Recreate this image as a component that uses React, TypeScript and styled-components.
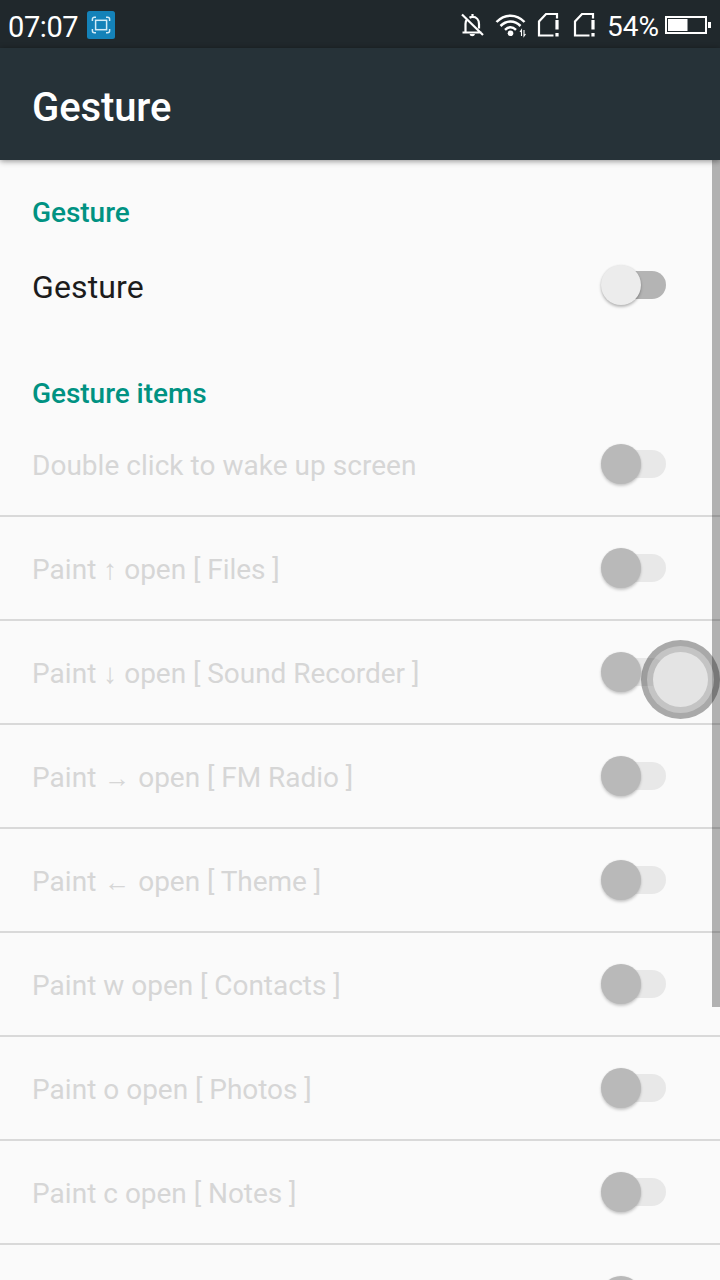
import React from "react";
import styled, { createGlobalStyle } from "styled-components";

const GlobalStyle = createGlobalStyle`
  body { margin: 0; background: #fafafa; overflow: hidden; }
  * { box-sizing: border-box; }
`;

const Screen = styled.div`
  position: relative;
  width: 720px;
  height: 1280px;
  overflow: hidden;
  background: #fafafa;
  font-family: Roboto, "Liberation Sans", sans-serif;
`;

const StatusBar = styled.header`
  display: flex;
  align-items: center;
  height: 48px;
  padding: 2px 9px 0 8px;
  background: #20282c;
  color: #fff;
`;

const Clock = styled.span`
  width: 79px;
  font-size: 29px;
  line-height: 46px;
  padding-top: 3px;
  letter-spacing: -0.4px;
`;

const StatusIcons = styled.div`
  display: flex;
  align-items: center;
  margin-left: auto;
`;

const Percent = styled.span`
  width: 58px;
  padding-top: 3px;
  font-size: 28px;
  line-height: 46px;
`;

const AppBar = styled.div`
  position: relative;
  display: flex;
  align-items: center;
  height: 112px;
  padding: 6px 32px 0;
  background: #263238;
  box-shadow: 0 1px 6px rgba(0, 0, 0, 0.45);
`;

const Title = styled.h1`
  margin: 0;
  color: #fff;
  font-size: 40px;
  font-weight: 500;
  letter-spacing: -0.1px;
`;

const SectionTitle = styled.h2<{ $top: number; $height: number }>`
  margin: 0;
  height: ${(p) => p.$height}px;
  padding: ${(p) => p.$top}px 32px 0;
  color: #009282;
  font-size: 28px;
  font-weight: 500;
  line-height: 32px;
  letter-spacing: -0.05px;
`;

const Row = styled.div<{ $main?: boolean }>`
  display: flex;
  align-items: center;
  justify-content: space-between;
  height: 104px;
  padding: 0 54px 0 32px;
  border-bottom: 2px solid ${(p) => (p.$main ? "transparent" : "#d9d9d9")};
`;

const Label = styled.span<{ $main?: boolean }>`
  padding-top: ${(p) => (p.$main ? 3 : 4)}px;
  color: ${(p) => (p.$main ? "#1c1c1c" : "#d6d6d6")};
  font-size: ${(p) => (p.$main ? 32 : 28)}px;
  line-height: 38px;
  letter-spacing: ${(p) => (p.$main ? 0.12 : 0.03)}px;
  white-space: pre;
`;

const AppName = styled.span`
  letter-spacing: -0.04px;
`;

const Arrow = styled.span<{ $wide: boolean }>`
  display: inline-block;
  width: ${(p) => (p.$wide ? 28 : 14)}px;
  font-family: "Liberation Sans", sans-serif;
  font-size: ${(p) => (p.$wide ? 26 : 28)}px;
  line-height: 28px;
  text-align: center;
`;

const Track = styled.div<{ $enabled?: boolean }>`
  display: flex;
  align-items: center;
  width: 54px;
  height: 28px;
  border-radius: 14px;
  background: ${(p) => (p.$enabled ? "#b4b4b4" : "#e8e8e8")};
`;

const Thumb = styled.div<{ $enabled?: boolean }>`
  flex: none;
  width: 40px;
  height: 40px;
  margin-left: -11px;
  border-radius: 50%;
  background: ${(p) => (p.$enabled ? "#ececec" : "#b9b9b9")};
  box-shadow: 0 2px 3px rgba(0, 0, 0, ${(p) => (p.$enabled ? 0.26 : 0.19)}), 0 0 2px rgba(0, 0, 0, 0.08);
`;

const ScrollBar = styled.div`
  position: absolute;
  top: 160px;
  right: 0;
  width: 8px;
  height: 847px;
  background: rgba(0, 0, 0, 0.29);
`;

const AssistiveButton = styled.div`
  position: absolute;
  left: 641px;
  top: 640px;
  width: 79px;
  height: 79px;
`;

const items: { text: string; arrow?: string; app?: string }[] = [
  { text: "Double click to wake up screen" },
  { text: "Paint ", arrow: "↑", app: "Files" },
  { text: "Paint ", arrow: "↓", app: "Sound Recorder" },
  { text: "Paint ", arrow: "→", app: "FM Radio" },
  { text: "Paint ", arrow: "←", app: "Theme" },
  { text: "Paint w", app: "Contacts" },
  { text: "Paint o", app: "Photos" },
  { text: "Paint c", app: "Notes" },
  { text: "" },
];

const Toggle = ({ enabled }: { enabled?: boolean }) => (
  <Track $enabled={enabled}>
    <Thumb $enabled={enabled} />
  </Track>
);

const ScreenshotIcon = () => (
  <svg width="28" height="28" viewBox="0 0 28 28" fill="none" stroke="#d3ebf7" strokeWidth="1.5">
    <rect width="28" height="28" rx="2.5" fill="#1482b9" stroke="none" />
    <rect x="8.6" y="9.3" width="11" height="9.4" />
    <path d="M5.400 10V8.200a2 2 0 0 1 2-2H9M19 6.200h1.600a2 2 0 0 1 2 2V10M22.600 18v1.800a2 2 0 0 1-2 2H19M9 21.800H7.400a2 2 0 0 1-2-2V18" />
  </svg>
);

const MutedBell = () => (
  <svg width="26" height="26" viewBox="-1 -1 26 26" fill="none" stroke="#fff" strokeWidth="2.2">
    <path d="M2.500 19.500h19M5.500 19V11c0-2 .6-3.500 1.600-4.700M9.500 4.800c1-.6 2-.9 3-.9 4 0 6.500 3 6.500 7v4.500M12.500 4V1M2 1.500l21 20.500" />
    <path d="M9.500 21h5.500a2.800 2.700 0 0 1-5.500 0z" fill="#fff" stroke="none" />
  </svg>
);

const Wifi = () => (
  <svg width="32" height="26" viewBox="0 0 32 26" fill="none" stroke="#fff" strokeWidth="2.500">
    <path d="M1.500 10C9.500 1.500 21.500 1.500 29.500 10M5.500 14c6-6 14-6 20 0M10 17.800c3.500-3.300 7.500-3.300 11 0" />
    <circle cx="15.500" cy="21.300" r="2.800" fill="#fff" stroke="none" />
    <path d="M26.500 24v-6l-1.500 2M29 18v6l1.500-2" strokeWidth="1.100" />
  </svg>
);

const SimAlert = () => (
  <svg width="22" height="26" viewBox="0 0 22 26" fill="none" stroke="#fff" strokeWidth="2.200">
    <path d="M16.500 23.500H2V9.500L9 2h11v4.500" />
    <path d="M20 8v9.500M20 21v3.500" strokeWidth="3.200" />
  </svg>
);

const Battery = () => (
  <svg width="46" height="20" viewBox="0 0 46 20" fill="none">
    <rect x="1" y="2" width="40" height="16" stroke="#fff" strokeWidth="2" />
    <path d="M3 4h19.500v12H3zM43 7h3v6h-3z" fill="#fff" />
  </svg>
);

const IconSlot = styled.span<{ $gap: number }>`
  display: flex;
  margin-right: ${(p) => p.$gap}px;
`;

export default function App() {
  return (
    <Screen>
      <GlobalStyle />
      <StatusBar>
        <Clock>07:07</Clock>
        <ScreenshotIcon />
        <StatusIcons>
          <IconSlot $gap={10}><MutedBell /></IconSlot>
          <IconSlot $gap={10}><Wifi /></IconSlot>
          <IconSlot $gap={14}><SimAlert /></IconSlot>
          <IconSlot $gap={12}><SimAlert /></IconSlot>
          <Percent>54%</Percent>
          <Battery />
        </StatusIcons>
      </StatusBar>
      <AppBar>
        <Title>Gesture</Title>
      </AppBar>
      <SectionTitle $top={37} $height={74}>Gesture</SectionTitle>
      <Row $main>
        <Label $main>Gesture</Label>
        <Toggle enabled />
      </Row>
      <SectionTitle $top={40} $height={75}>Gesture items</SectionTitle>
      {items.map((item) => (
        <Row key={item.app ?? item.text}>
          <Label>
            {item.text}
            {item.arrow && <Arrow $wide={item.arrow === "→" || item.arrow === "←"}>{item.arrow}</Arrow>}
            {item.app && <AppName>{` open [ ${item.app} ]`}</AppName>}
          </Label>
          <Toggle />
        </Row>
      ))}
      <ScrollBar />
      <AssistiveButton>
        <svg width="79" height="79" viewBox="0 0 79 79">
          <circle cx="39.500" cy="39.500" r="39.500" fill="#000" fillOpacity="0.32" />
          <circle cx="39.500" cy="39.500" r="33.500" fill="#fff" fillOpacity="0.32" />
          <circle cx="39.500" cy="39.500" r="27.500" fill="#e4e4e4" />
        </svg>
      </AssistiveButton>
    </Screen>
  );
}
